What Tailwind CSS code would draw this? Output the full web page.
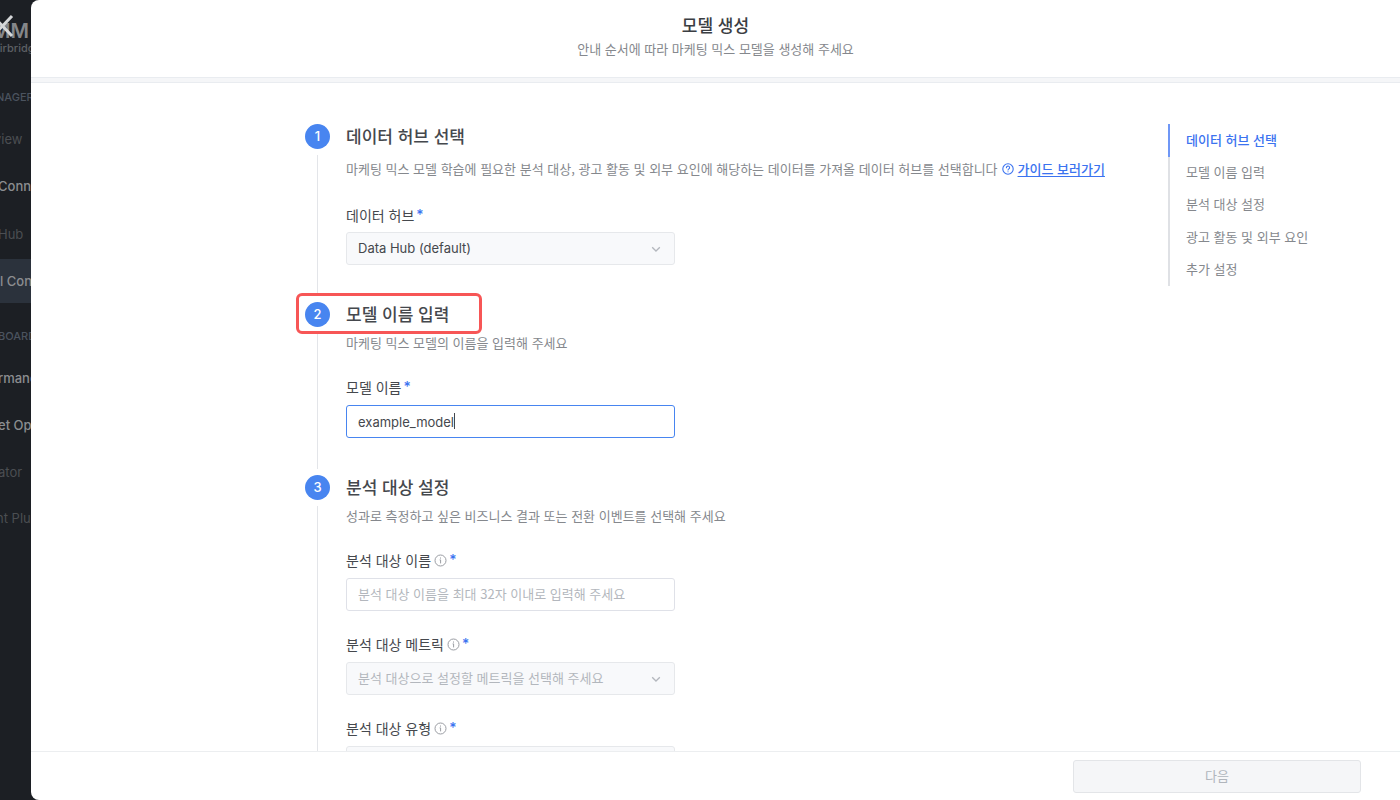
<!DOCTYPE html>
<html lang="ko">
<head>
  <meta charset="UTF-8">
  <meta name="viewport" content="width=device-width, initial-scale=1.0">
  <title>모델 생성</title>
  <script src="https://cdn.jsdelivr.net/npm/@tailwindcss/browser@4"></script>
</head>
<body class="h-screen flex overflow-hidden bg-[#1c1f24] font-['Noto_Sans_CJK_KR','Inter',sans-serif] text-[#45484d]">

  <!-- Sidebar behind the modal -->
  <aside class="relative w-[31px] shrink-0 overflow-hidden whitespace-nowrap font-['Inter',sans-serif] text-[13px] leading-5 text-[#8b8d90]">
    <div class="pt-5 -ml-2">
      <div class="text-xl leading-[22px] font-semibold text-[#85878a]">MM</div>
      <div class="text-[11px] leading-3 font-medium text-[#5d6064]">Airbridge</div>
    </div>
    <div class="mt-[33px] -ml-1 text-[11px] font-medium text-[#4b535f]">NAGER</div>
    <nav class="mt-[22px]">
      <a href="#" class="block -ml-1.5 pb-[13px] text-[#4b4e52]">view</a>
      <a href="#" class="block -ml-0.5 py-[14px] font-medium">Connector</a>
      <a href="#" class="block -ml-0.5 pt-[14px] pb-[15px] text-[#4b4e52]">Hub</a>
      <a href="#" class="block py-3 font-medium bg-[#2b323c]">l Connect</a>
    </nav>
    <div class="mt-[23px] -ml-0.5 text-[11px] font-medium text-[#4b535f]">BOARD</div>
    <nav class="mt-[22px]">
      <a href="#" class="block -ml-0.5 pb-[13px] font-medium">rmance</a>
      <a href="#" class="block -ml-0.5 py-[14px] font-medium">et Optimizer</a>
      <a href="#" class="block -ml-0.5 py-[13px] text-[#4b4e52]">ator</a>
      <a href="#" class="block -ml-1 py-[13px] text-[#4b4e52]">nt Plugin</a>
    </nav>
    <button type="button" aria-label="닫기" class="absolute -left-2 top-3.5 text-[#d5d7d9]">
      <svg width="22" height="24" viewBox="0 0 22 24" fill="none" stroke="currentColor" stroke-width="3"><path d="M1 2l19 20M20 2L1 22"/></svg>
    </button>
  </aside>

  <!-- Modal -->
  <div class="flex-1 min-w-0 flex flex-col bg-white rounded-l-lg overflow-hidden">
    <header class="h-[83px] shrink-0 flex flex-col">
      <div class="flex-1 pt-3 text-center">
        <h1 class="text-[17px] leading-[26px] font-medium text-[#3b3e43]">모델 생성</h1>
        <p class="text-[13px] leading-[22px] text-[#85888d]">안내 순서에 따라 마케팅 믹스 모델을 생성해 주세요</p>
      </div>
      <div class="h-1.5 bg-[#f5f6f8] border-y border-[#e9ecf0]"></div>
    </header>

    <div class="flex-1 min-h-0 overflow-hidden grid grid-cols-[1fr_821px_1fr] pt-[41px]">
      <main class="col-start-2">

        <section class="flex gap-4">
          <div class="w-[25px] shrink-0 flex flex-col items-center">
            <span class="size-[25px] rounded-full bg-[#4885f0] text-white text-[13px] leading-[25px] font-medium text-center font-['Inter',sans-serif]">1</span>
            <span class="flex-1 w-px my-1.5 bg-[#e3e5e9]"></span>
          </div>
          <div class="pb-[37px]">
            <h2 class="text-[17px] leading-6 font-medium">데이터 허브 선택</h2>
            <p class="mt-[11px] flex items-center text-[13px] leading-5 whitespace-nowrap text-[#85888d]">
              마케팅 믹스 모델 학습에 필요한 분석 대상, 광고 활동 및 외부 요인에 해당하는 데이터를 가져올 데이터 허브를 선택합니다
              <svg class="ml-1 mr-1 text-[#3b73f0]" width="12" height="12" viewBox="0 0 12 12" fill="none" stroke="currentColor" stroke-width="1.1" stroke-linecap="round"><circle cx="6" cy="6" r="5.2"/><path d="M4.4 4.7a1.6 1.6 0 1 1 2.3 1.4c-.5.3-.7.5-.7.9"/><path d="M6 8.7v.1"/></svg>
              <a href="#" class="text-[#3b73f0] font-medium underline underline-offset-2">가이드 보러가기</a>
            </p>
            <div class="mt-[26px] w-[329px]">
              <label for="hub" class="flex text-[14px] leading-5">데이터 허브<span class="ml-0.5 font-medium text-[#3b73f0] font-['Inter',sans-serif]">*</span></label>
              <div class="relative mt-[7px]">
                <select id="hub" class="block w-full h-[33px] pl-[11px] appearance-none rounded-[3px] border border-[#e6e8eb] bg-[#f8f9fb] text-[13px] font-['Inter','Noto_Sans_CJK_KR',sans-serif]">
                  <option>Data Hub (default)</option>
                </select>
                <svg class="absolute right-[14px] top-3 text-[#b3b7bd] pointer-events-none" width="10" height="10" viewBox="0 0 10 10" fill="none" stroke="currentColor" stroke-width="1.3"><path d="M1.2 3.2L5 7l3.800-3.800"/></svg>
              </div>
            </div>
          </div>
        </section>

        <section class="relative flex gap-4">
          <div class="absolute -left-[9px] -top-[9px] w-[186px] h-[41px] rounded-md border-3 border-[#f75656] pointer-events-none"></div>
          <div class="w-[25px] shrink-0 flex flex-col items-center">
            <span class="size-[25px] rounded-full bg-[#4885f0] text-white text-[13px] leading-[25px] font-medium text-center font-['Inter',sans-serif]">2</span>
            <span class="flex-1 w-px my-1.5 bg-[#e3e5e9]"></span>
          </div>
          <div class="pb-[37px]">
            <h2 class="text-[17px] leading-6 font-medium">모델 이름 입력</h2>
            <p class="mt-[7px] text-[13px] leading-5 text-[#85888d]">마케팅 믹스 모델의 이름을 입력해 주세요</p>
            <div class="mt-6 w-[329px]">
              <label for="model-name" class="flex text-[14px] leading-5">모델 이름<span class="ml-0.5 font-medium text-[#3b73f0] font-['Inter',sans-serif]">*</span></label>
              <div class="relative mt-2">
                <input id="model-name" type="text" value="example_model" class="block w-full h-[33px] px-[11px] rounded-[3px] border border-[#4885f0] bg-white text-[13px] outline-none font-['Inter','Noto_Sans_CJK_KR',sans-serif]">
                <span class="absolute left-[108px] top-2 w-px h-4 bg-[#45484d]"></span>
              </div>
            </div>
          </div>
        </section>

        <section class="flex gap-4">
          <div class="w-[25px] shrink-0 flex flex-col items-center">
            <span class="size-[25px] rounded-full bg-[#4885f0] text-white text-[13px] leading-[25px] font-medium text-center font-['Inter',sans-serif]">3</span>
            <span class="flex-1 w-px my-1.5 bg-[#e3e5e9]"></span>
          </div>
          <div class="pb-[37px]">
            <h2 class="text-[17px] leading-6 font-medium">분석 대상 설정</h2>
            <p class="mt-[7px] text-[13px] leading-5 text-[#85888d]">성과로 측정하고 싶은 비즈니스 결과 또는 전환 이벤트를 선택해 주세요</p>
            <div class="mt-6 w-[329px] flex flex-col gap-[23px]">
              <div>
                <label for="target-name" class="flex text-[14px] leading-5">분석 대상 이름
                  <svg class="ml-[3px] mt-1 text-[#9a9da3]" width="13" height="13" viewBox="0 0 13 13" fill="none" stroke="currentColor"><circle cx="6.500" cy="6.500" r="5.500"/><path d="M5.600 5.900h1v3.500M6.500 3.500v1.100"/></svg>
                  <span class="ml-0.5 font-medium text-[#3b73f0] font-['Inter',sans-serif]">*</span>
                </label>
                <input id="target-name" type="text" placeholder="분석 대상 이름을 최대 32자 이내로 입력해 주세요" class="mt-2 block w-full h-[33px] px-[11px] pb-0.5 rounded-[3px] border border-[#dfe1e8] bg-white text-[13px] placeholder:text-[#b3b7bd]">
              </div>
              <div>
                <label for="target-metric" class="flex text-[14px] leading-5">분석 대상 메트릭
                  <svg class="ml-[3px] mt-1 text-[#9a9da3]" width="13" height="13" viewBox="0 0 13 13" fill="none" stroke="currentColor"><circle cx="6.500" cy="6.500" r="5.500"/><path d="M5.600 5.900h1v3.500M6.500 3.500v1.100"/></svg>
                  <span class="ml-0.5 font-medium text-[#3b73f0] font-['Inter',sans-serif]">*</span>
                </label>
                <div class="relative mt-2">
                  <select id="target-metric" class="block w-full h-[33px] pl-[11px] pb-0.5 appearance-none rounded-[3px] border border-[#e6e8eb] bg-[#f8f9fb] text-[13px] text-[#b3b7bd]">
                    <option>분석 대상으로 설정할 메트릭을 선택해 주세요</option>
                  </select>
                  <svg class="absolute right-[14px] top-3 text-[#b3b7bd] pointer-events-none" width="10" height="10" viewBox="0 0 10 10" fill="none" stroke="currentColor" stroke-width="1.3"><path d="M1.2 3.2L5 7l3.800-3.800"/></svg>
                </div>
              </div>
              <div>
                <label for="target-type" class="flex text-[14px] leading-5">분석 대상 유형
                  <svg class="ml-[3px] mt-1 text-[#9a9da3]" width="13" height="13" viewBox="0 0 13 13" fill="none" stroke="currentColor"><circle cx="6.500" cy="6.500" r="5.500"/><path d="M5.600 5.900h1v3.500M6.500 3.500v1.100"/></svg>
                  <span class="ml-0.5 font-medium text-[#3b73f0] font-['Inter',sans-serif]">*</span>
                </label>
                <select id="target-type" class="mt-2 block w-full h-[33px] pl-[11px] appearance-none rounded-[3px] border border-[#e6e8eb] bg-[#f8f9fb] text-[13px]"></select>
              </div>
            </div>
          </div>
        </section>
      </main>

      <nav class="ml-[42px] self-start flex flex-col text-[13px] leading-[20px] text-[#85888d] whitespace-nowrap">
        <a href="#" class="pl-4 pt-1.5 pb-[7px] border-l-2 border-[#6f97f6] font-medium text-[#3b73f0]">데이터 허브 선택</a>
        <a href="#" class="pl-4 pt-[5px] pb-[7px] border-l-2 border-[#dfe1e5]">모델 이름 입력</a>
        <a href="#" class="pl-4 pt-[5px] pb-[7px] border-l-2 border-[#dfe1e5]">분석 대상 설정</a>
        <a href="#" class="pl-4 pt-1.5 pb-[7px] border-l-2 border-[#dfe1e5]">광고 활동 및 외부 요인</a>
        <a href="#" class="pl-4 pt-[5px] pb-[7px] border-l-2 border-[#dfe1e5]">추가 설정</a>
      </nav>
    </div>

    <footer class="h-[49px] shrink-0 flex justify-end items-start pt-2 pr-[39px] border-t border-[#eceef0]">
      <button type="button" disabled class="w-72 h-[33px] pb-0.5 rounded-[3px] border border-[#e3e5e8] bg-[#f5f6f8] text-[13px] text-[#b0b5bc]">다음</button>
    </footer>
  </div>
</body>
</html>
